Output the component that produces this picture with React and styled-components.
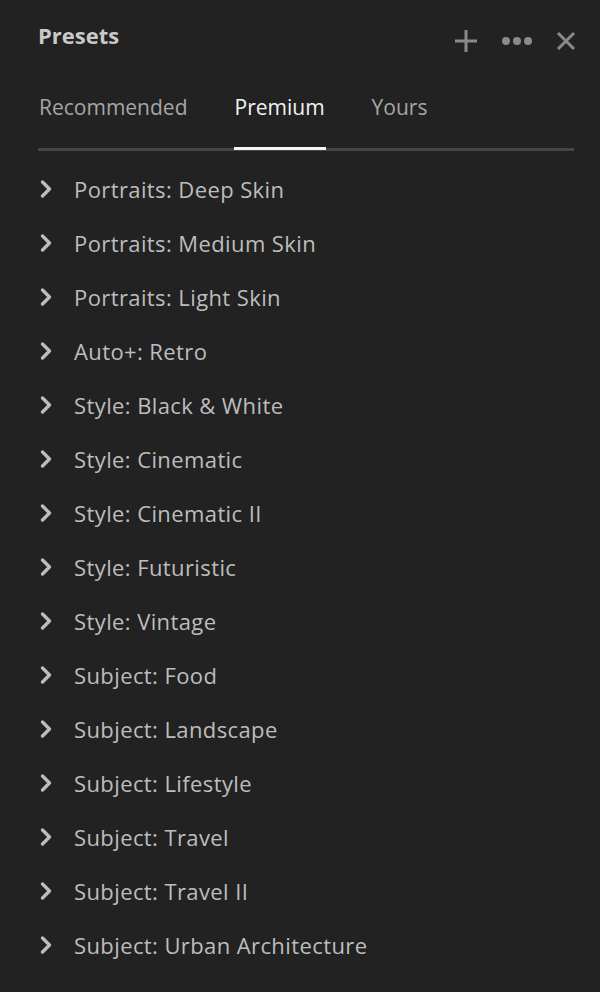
import React from 'react'
import styled, { createGlobalStyle } from 'styled-components'

const Global = createGlobalStyle`
  html, body {
    margin: 0;
    background: #222222;
  }
  body {
    font-family: "Open Sans", "Noto Sans", sans-serif;
  }
`

const Panel = styled.div`
  width: 600px;
  height: 992px;
  background: #222222;
  padding: 0 24px 0 38px;
  box-sizing: border-box;
`

const Header = styled.div`
  display: flex;
  align-items: center;
  justify-content: space-between;
  height: 74px;
`

const Title = styled.span`
  font-size: 22px;
  font-weight: 700;
  color: #c9c9c9;
  margin-top: -4px;
`

const Actions = styled.div`
  display: flex;
  align-items: center;
  gap: 23px;
  margin-top: 8px;
`

const IconButton = styled.button`
  background: none;
  border: none;
  padding: 0;
  display: flex;
  cursor: pointer;
  color: #8a8a8a;
`

const Tabs = styled.div`
  display: flex;
  gap: 45px;
  border-bottom: 3px solid #464646;
  height: 77px;
  box-sizing: border-box;
  width: 536px;
`

const Tab = styled.div`
  font-size: 21px;
  color: ${p => (p.$active ? '#f2f2f2' : '#a6a6a6')};
  padding: 0 1px 8px;
  display: flex;
  align-items: center;
  height: 76px;
  margin-bottom: -3px;
  box-sizing: border-box;
  border-bottom: 3px solid ${p => (p.$active ? '#f5f5f5' : 'transparent')};
`

const List = styled.ul`
  list-style: none;
  margin: 0;
  padding: 11px 0 0;
`

const Row = styled.li`
  display: flex;
  align-items: center;
  height: 54px;
  gap: 22px;
  color: #bdbdbd;
  font-size: 22px;
  letter-spacing: 0.4px;
  cursor: pointer;
`

const Chevron = () => (
  <svg width="14" height="20" viewBox="0 0 14 20">
    <path d="M4.5 3 L11.5 10 L4.5 17" fill="none" stroke="#bdbdbd" strokeWidth="3.4" strokeLinecap="round" strokeLinejoin="round" />
  </svg>
)

const items = [
  'Portraits: Deep Skin',
  'Portraits: Medium Skin',
  'Portraits: Light Skin',
  'Auto+: Retro',
  'Style: Black & White',
  'Style: Cinematic',
  'Style: Cinematic II',
  'Style: Futuristic',
  'Style: Vintage',
  'Subject: Food',
  'Subject: Landscape',
  'Subject: Lifestyle',
  'Subject: Travel',
  'Subject: Travel II',
  'Subject: Urban Architecture',
]

export default function App() {
  return (
    <>
      <Global />
      <Panel>
        <Header>
          <Title>Presets</Title>
          <Actions>
            <IconButton>
              <svg width="24" height="24" viewBox="0 0 24 24">
                <path d="M12 1 V23 M1 12 H23" stroke="currentColor" strokeWidth="3" />
              </svg>
            </IconButton>
            <IconButton>
              <svg width="32" height="10" viewBox="0 0 32 10">
                <circle cx="5" cy="5" r="4" fill="currentColor" />
                <circle cx="16" cy="5" r="4" fill="currentColor" />
                <circle cx="27" cy="5" r="4" fill="currentColor" />
              </svg>
            </IconButton>
            <IconButton>
              <svg width="20" height="20" viewBox="0 0 20 20">
                <path d="M2 2 L18 18 M18 2 L2 18" stroke="currentColor" strokeWidth="3" />
              </svg>
            </IconButton>
          </Actions>
        </Header>
        <Tabs>
          <Tab>Recommended</Tab>
          <Tab $active>Premium</Tab>
          <Tab>Yours</Tab>
        </Tabs>
        <List>
          {items.map(t => (
            <Row key={t}>
              <Chevron />
              {t}
            </Row>
          ))}
        </List>
      </Panel>
    </>
  )
}
